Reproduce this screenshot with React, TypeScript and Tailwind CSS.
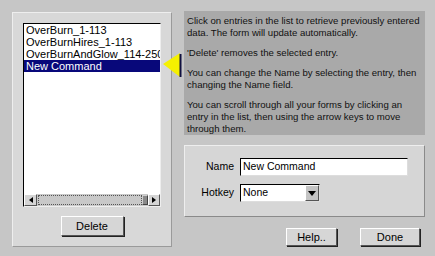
import React from "react";

const entries = ["OverBurn_1-113", "OverBurnHires_1-113", "OverBurnAndGlow_114-250", "New Command"];

function Button({ label, className }: { label: string; className?: string }) {
  return (
    <div
      className={`flex items-center justify-center bg-[#d6d6d6] border border-t-white border-l-white border-r-[#555] border-b-[#555] shadow-[1px_1px_0_#222] text-[11px] text-black ${className ?? ""}`}
    >
      {label}
    </div>
  );
}

function HelpText() {
  return (
    <div className="w-[241px] h-[124px] bg-[#a9a9a9] px-[3px] pt-[4px] text-[9.6px] leading-[12px] text-[#111]">
      <p>Click on entries in the list to retrieve previously entered data. The form will update automatically.</p>
      <p className="mt-[8px]">'Delete' removes the selected entry.</p>
      <p className="mt-[8px]">You can change the Name by selecting the entry, then changing the Name field.</p>
      <p className="mt-[8px]">You can scroll through all your forms by clicking an entry in the list, then using the arrow keys to move through them.</p>
    </div>
  );
}

export default function App() {
  return (
    <div
      className="relative w-[435px] h-[256px] bg-[#c6c6c6] flex gap-[12px] pl-[12px] pt-[11px] overflow-hidden"
      style={{ fontFamily: '"Liberation Sans", Arial, sans-serif' }}
    >
      {/* left panel */}
      <div className="mt-[1px] w-[160px] h-[235px] bg-[#d8d8d8] border border-t-[#eeeeee] border-l-[#eeeeee] border-r-[#9a9a9a] border-b-[#9a9a9a] flex flex-col items-center pt-[10px]">
        <div className="w-[138px] h-[184px] bg-white border border-t-black border-l-black border-r-[#eeeeee] border-b-[#eeeeee] flex flex-col">
          <div className="flex-1 text-[11px] leading-[12px] text-black overflow-hidden">
            {entries.map((e, i) => (
              <div
                key={e}
                className={`pl-[2px] whitespace-nowrap overflow-hidden ${i === 3 ? "bg-[#08087a] text-white" : ""}`}
              >
                {e}
              </div>
            ))}
          </div>
          {/* horizontal scrollbar */}
          <div className="h-[12px] flex bg-[#c8c8c8]">
            <div className="w-[13px] flex items-center justify-center bg-[#d4d4d4] border border-t-white border-l-white border-r-[#555] border-b-[#555]">
              <div className="w-0 h-0 border-y-[3px] border-y-transparent border-r-[4px] border-r-black" />
            </div>
            <div className="flex-1 flex items-stretch py-[1px] pl-[1px]">
              <div className="flex-1 border border-dotted border-[#555]" />
              <div className="w-[6px] bg-[#8a8a8a] border border-t-[#cfcfcf] border-l-[#cfcfcf] border-r-[#444] border-b-[#444]" />
            </div>
            <div className="w-[12px] flex items-center justify-center bg-[#d4d4d4] border border-t-white border-l-white border-r-[#555] border-b-[#555]">
              <div className="w-0 h-0 border-y-[3px] border-y-transparent border-l-[4px] border-l-black" />
            </div>
          </div>
        </div>
        <Button label="Delete" className="mt-[9px] w-[63px] h-[20px]" />
      </div>

      {/* right column */}
      <div className="flex flex-col">
        <HelpText />
        <div className="mt-[10px] w-[241px] h-[72px] bg-[#d6d6d6] border border-t-[#eeeeee] border-l-[#eeeeee] border-r-[#8a8a8a] border-b-[#8a8a8a] flex flex-col gap-[8px] pt-[12px] text-[10.5px] text-black">
          <div className="flex items-center">
            <span className="w-[55px] text-right pr-[6px]">Name</span>
            <div className="w-[168px] h-[18px] bg-white border border-t-black border-l-black border-r-[#ddd] border-b-[#ddd] flex items-center pl-[2px]">
              New Command
            </div>
          </div>
          <div className="flex items-center">
            <span className="w-[55px] text-right pr-[6px]">Hotkey</span>
            <div className="w-[80px] h-[18px] bg-white border border-t-black border-l-black border-r-[#ddd] border-b-[#ddd] flex items-center">
              <span className="flex-1 pl-[2px]">None</span>
              <div className="w-[14px] h-[16px] flex items-center justify-center bg-[#c4c4c4] border border-t-white border-l-white border-r-[#555] border-b-[#555]">
                <div className="w-0 h-0 border-x-[4px] border-x-transparent border-t-[5px] border-t-black" />
              </div>
            </div>
          </div>
        </div>
        <div className="mt-[11px] flex justify-end gap-[23px] pr-[5px]">
          <Button label="Help.." className="w-[51px] h-[18px]" />
          <Button label="Done" className="w-[60px] h-[18px]" />
        </div>
      </div>

      {/* pointer arrow */}
      <svg className="absolute left-[162px] top-[52px]" width="22" height="27" viewBox="0 0 22 27">
        <polygon points="1,12 18,1 18,25" fill="#f5f000" />
        <line x1="18.5" y1="2" x2="18.5" y2="25" stroke="#101040" strokeWidth="2" />
      </svg>
    </div>
  );
}
